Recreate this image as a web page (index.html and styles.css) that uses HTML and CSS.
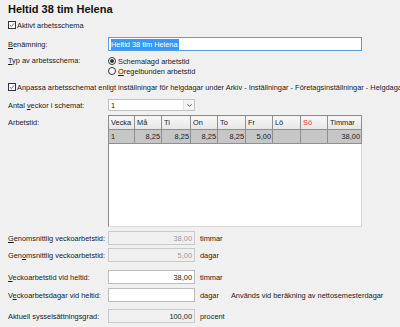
FILE: index.html
```html
<!DOCTYPE html>
<html>
  <head>
    <meta http-equiv="content-type" content="text/html; charset=UTF-8">
    <meta name="viewport" content="width=device-width, initial-scale=1">
    <link rel="stylesheet" href="styles.css">
  </head>
  <body>
    <div class="formular">
      <h1 class="rubrik">Heltid 38 tim Helena</h1>

      <div class="kryss rad-aktiv">
        <span class="ruta"><svg viewBox="0 0 8 8" width="8" height="8"><path d="M1.3 4.2 L3.2 6 L6.8 1.8" fill="none" stroke="#2b5fa8" stroke-width="1.2"/></svg></span>
        <span>Aktivt arbetsschema</span>
      </div>

      <div class="rad rad-namn">
        <span class="etikett"><u>B</u>enämning:</span>
        <div class="falt fokus"><span class="markerad">Heltid 38 tim Helena</span></div>
      </div>

      <div class="rad rad-typ">
        <span class="etikett"><u>T</u>yp av arbetsschema:</span>
        <div class="radioer">
          <div class="radio"><span class="rundel vald"></span>Schemalagd arbetstid</div>
          <div class="radio"><span class="rundel"></span><u>O</u>regelbunden arbetstid</div>
        </div>
      </div>

      <div class="kryss rad-anpassa">
        <span class="ruta"><svg viewBox="0 0 8 8" width="8" height="8"><path d="M1.3 4.2 L3.2 6 L6.8 1.8" fill="none" stroke="#2b5fa8" stroke-width="1.2"/></svg></span>
        <span class="lang">Anpassa arbetsschemat enligt inställningar för helgdagar under Arkiv - Inställningar - Företagsinställningar - Helgdagar</span>
      </div>

      <div class="rad rad-antal">
        <span class="etikett">Antal <u>v</u>eckor i schemat:</span>
        <div class="lista">
          <span class="lista-text">1</span>
          <span class="pil"><svg viewBox="0 0 8 6" width="7" height="5"><path d="M1.5 1.5 L4 4 L6.5 1.5" fill="none" stroke="#444" stroke-width="1.1"/></svg></span>
        </div>
      </div>

      <div class="rad rad-tid">
        <span class="etikett">Arbetstid:</span>
        <div class="rutnat">
          <table class="tabell">
            <colgroup>
              <col style="width:26px"><col style="width:27px"><col style="width:29px">
              <col style="width:27px"><col style="width:28px"><col style="width:27px">
              <col style="width:28px"><col style="width:27px"><col style="width:34px">
            </colgroup>
            <tr class="huvud">
              <th>Vecka</th><th>Må</th><th>Ti</th><th>On</th><th>To</th><th>Fr</th><th>Lö</th><th class="sondag">Sö</th><th>Timmar</th>
            </tr>
            <tr class="data">
              <td class="vanster">1</td><td>8,25</td><td>8,25</td><td>8,25</td><td>8,25</td><td>5,00</td><td></td><td></td><td>38,00</td>
            </tr>
          </table>
        </div>
      </div>

      <div class="rad rad-g1">
        <span class="etikett"><u>G</u>enomsnittlig veckoarbetstid:</span>
        <div class="falt litet last gra">38,00</div>
        <span class="enhet">timmar</span>
      </div>

      <div class="rad rad-g2">
        <span class="etikett">Gen<u>o</u>msnittlig veckoarbetstid:</span>
        <div class="falt litet last gra">5,00</div>
        <span class="enhet">dagar</span>
      </div>

      <div class="rad rad-v1">
        <span class="etikett"><u>V</u>eckoarbetstid vid heltid:</span>
        <div class="falt litet">38,00</div>
        <span class="enhet">timmar</span>
      </div>

      <div class="rad rad-v2">
        <span class="etikett">V<u>e</u>ckoarbetsdagar vid heltid:</span>
        <div class="falt litet"></div>
        <span class="enhet">dagar</span>
        <span class="info">Används vid beräkning av nettosemesterdagar</span>
      </div>

      <div class="rad rad-akt">
        <span class="etikett">Aktuell sysselsättningsgrad:</span>
        <div class="falt litet last">100,00</div>
        <span class="enhet">procent</span>
      </div>
    </div>
  </body>
</html>
```

FILE: styles.css
```css
html{background-color: #f0f0f0;}
body{margin: 0; overflow: hidden;}
.formular{
  padding: 0 0 0 8px;
  font-family: "Liberation Sans", Arial, sans-serif;
  font-size: 7.4px;
  color: #1a1a1a;
  white-space: nowrap;
}
.rubrik{
  margin: 0;
  height: 18px;
  line-height: 18px;
  font-size: 11px;
  font-weight: bold;
  color: #111;
}
u{text-decoration-thickness: 1px; text-underline-offset: 1px;}

/* kryssrutor */
.kryss{
  display: flex;
  align-items: center;
  height: 10px;
}
.rad-aktiv{margin-top: 2px;}
.rad-anpassa{margin-top: 6px; overflow: hidden;}
.ruta{
  width: 8px;
  height: 8px;
  box-sizing: border-box;
  border: 1px solid #333;
  background: white;
  display: flex;
  align-items: center;
  justify-content: center;
  margin-right: 1px;
  flex: none;
}
.ruta svg{display: block;}

/* rader med etikett */
.rad{
  display: flex;
  align-items: center;
}
.etikett{
  width: 100px;
  flex: none;
}
.falt{
  box-sizing: border-box;
  height: 14px;
  border: 1px solid #bdbdbd;
  background: white;
  display: flex;
  align-items: center;
  padding: 0 2px;
}
.falt.fokus{
  width: 254px;
  border-color: #569de5;
}
.markerad{
  background: #3399ff;
  color: white;
  line-height: 11px;
  padding-right: 1px;
}
.falt.litet{
  width: 87px;
  justify-content: flex-end;
}
.falt.last{
  background: #f0f0f0;
  border-color: #cacaca;
}
.falt.gra{color: #9a9a9a;}
.enhet{margin-left: 5px;}
.info{margin-left: 12px;}

.rad-namn{margin-top: 7px;}
.rad-typ{margin-top: 5px; align-items: flex-start;}
.rad-typ .etikett{line-height: 10px;}
.radioer{display: flex; flex-direction: column;}
.radio{
  display: flex;
  align-items: center;
  height: 10px;
}
.rundel{
  width: 8px;
  height: 8px;
  box-sizing: border-box;
  border: 1px solid #333;
  border-radius: 50%;
  background: white;
  margin-right: 2px;
  display: flex;
  align-items: center;
  justify-content: center;
}
.rundel.vald::after{
  content: "";
  width: 4px;
  height: 4px;
  border-radius: 50%;
  background: #333;
}

.rad-antal{margin-top: 7px;}
.lista{
  box-sizing: border-box;
  width: 87px;
  height: 12px;
  border: 1px solid #c2c2c2;
  background: white;
  display: flex;
  align-items: center;
}
.lista-text{flex: 1; padding-left: 2px;}
.pil{
  width: 10px;
  height: 10px;
  display: flex;
  align-items: center;
  justify-content: center;
  background: #f4f4f4;
  border-left: 1px solid #e2e2e2;
}

/* tabell */
.rad-tid{margin-top: 4px; align-items: flex-start;}
.rad-tid .etikett{margin-top: 3px;}
.rutnat{
  box-sizing: border-box;
  width: 254px;
  height: 112px;
  background: white;
  border: 1px solid #d8d8d8;
  border-left-color: #8a8a8a;
}
.tabell{
  border-collapse: collapse;
  table-layout: fixed;
  width: 253px;
  margin-left: -1px;
  margin-top: -1px;
}
.tabell th, .tabell td{
  height: 14px;
  box-sizing: border-box;
  border: 1px solid #8f8f8f;
  padding: 0 1px 0 2px;
  font-weight: normal;
  overflow: hidden;
}
.huvud th{
  text-align: left;
  background: linear-gradient(#f7f7f7, #e6e6e6);
}
.huvud th.sondag{color: #e8383d;}
.data td{
  background: #c6c6c6;
  text-align: right;
}
.data td.vanster{text-align: left;}

.rad-g1{margin-top: 4px;}
.rad-g2{margin-top: 3px;}
.rad-v1{margin-top: 8px;}
.rad-v2{margin-top: 4px;}
.rad-akt{margin-top: 7px;}
```
